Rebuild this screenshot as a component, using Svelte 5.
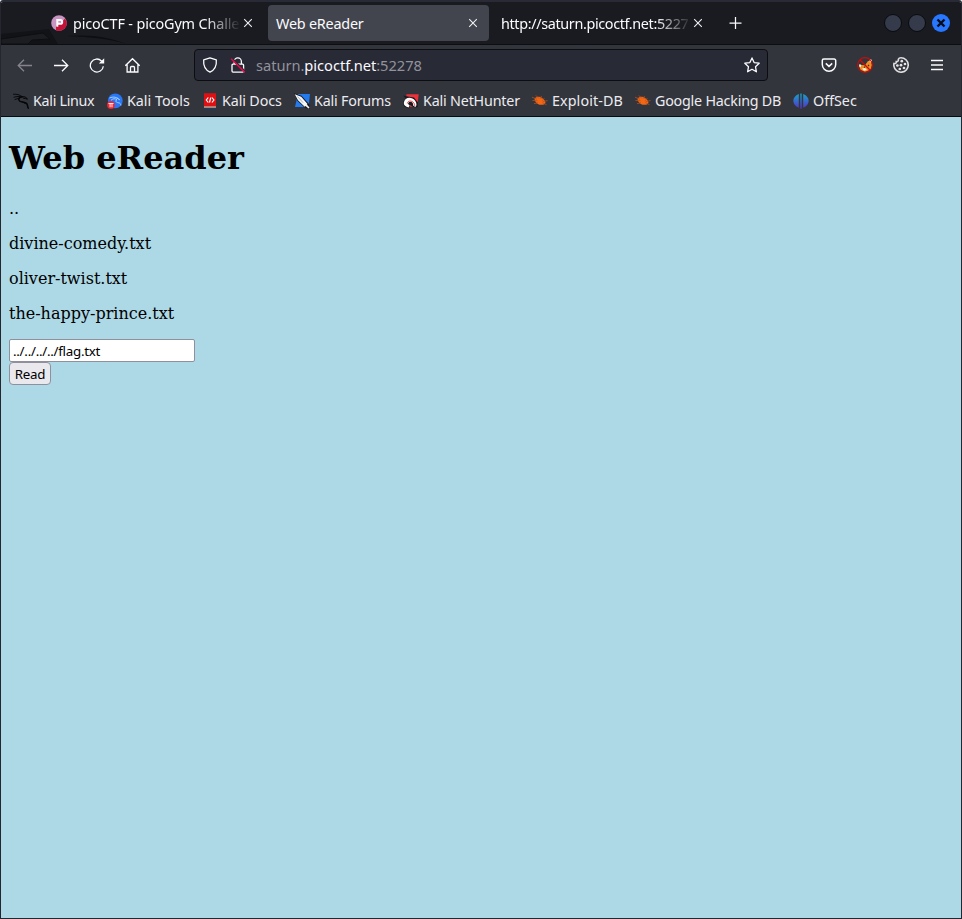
<script>
  const bookmarks = [
    { name: 'Kali Linux', icon: 'dragon', width: 94, track: -0.3 },
    { name: 'Kali Tools', icon: 'tools', width: 95, track: 0 },
    { name: 'Kali Docs', icon: 'docs', width: 92, track: -0.12 },
    { name: 'Kali Forums', icon: 'forums', width: 109, track: -0.2 },
    { name: 'Kali NetHunter', icon: 'hunter', width: 129, track: -0.18 },
    { name: 'Exploit-DB', icon: 'bug', width: 103, track: 0.1 },
    { name: 'Google Hacking DB', icon: 'bug', width: 158, track: -0.22 },
    { name: 'OffSec', icon: 'offsec', width: 80, track: 0 }
  ];
  const books = ['..', 'divine-comedy.txt', 'oliver-twist.txt', 'the-happy-prince.txt'];
  let file = $state('../../../../flag.txt');
</script>

{#snippet cross()}
  <svg class="cross" width="10" height="10" viewBox="0 0 10 10"><path d="M1.2 1.2l7.6 7.6M8.8 1.2L1.2 8.8" /></svg>
{/snippet}

{#snippet favicon(kind)}
  <svg class="fav" width="16" height="16" viewBox="0 0 16 16">
    {#if kind === 'dragon'}
      <g fill="none" stroke="#050607" stroke-linecap="round">
        <path stroke-width=".9" d="M.5 1.2C4 1 6.5 1.7 9 3.5M1 4.2c3-1 5-.8 8.2-.2M2 6.5l4.5-1.5" />
        <path stroke-width="1.5" d="M9 3.7C5.8 4 5 6.5 6.6 8c1.8 1.5 6.5.2 7.5 3.2.5 1.4.6 2.8 1.2 4" />
        <path stroke-width="1" d="M9 3.6l3.5.4 2 2.2-2-.6-2-.4M9.5 9l2.8 1.5" />
      </g>
    {:else if kind === 'tools'}
      <circle cx="8.3" cy="7.8" r="7.4" fill="#2777f6" />
      <path d="M2.5 5c4-1.7 7-.7 9 1M4 7.3c2-2 4-1.8 6-.8-2.2 1.5-.8 3 1.2 3.2 2 .2 2.500 1.3 2.700 2.8M10 5l3 2" fill="none" stroke="#b9d8ff" stroke-width=".9" />
      <circle cx="4" cy="12" r="3.9" fill="#ed2633" />
      <path d="M1.5 10.500h5M3.100 10.500v3.800M5 10.500v3.800" fill="none" stroke="#fff" stroke-width=".9" />
    {:else if kind === 'docs'}
      <path d="M2 .3h12v13.500H2z" fill="#df1014" />
      <path d="M2 13.500h12v1.300H2z" fill="#e9d4ad" />
      <path d="M2 14.700h12v1H2z" fill="#123f78" />
      <path d="M6.300 4.500L4.300 7l2 2.500M9.900 4.500l2 2.500-2 2.500M8.700 4.700L7.500 9.500" fill="none" stroke="#fff" stroke-width="1.200" />
    {:else if kind === 'forums'}
      <path d="M4 1h12l-1.500 13H1z" fill="#237bef" />
      <path d="M0 .2l7.5 2.600 7.5 8.200 1 4.500-4.500-.3L3.500 8z" fill="#171a1e" />
      <path d="M.7 1.300l6.500 2.400L13.500 11l-2.800 2.800L4 7.300zM12.800 11.500l2.700 3-1 1-3-2.500z" fill="#f4f6f7" />
      <path d="M3.500 3.600l5.500 6" stroke="#777e88" stroke-width=".6" />
    {:else if kind === 'hunter'}
      <path d="M3.500 1.200h12.200l-1.500 12.500H2z" fill="#ed3039" />
      <path d="M0 2.500l6 1.300 5 .8 4 5-.3 4.600h-4.200L7 12l-1 3.500-5-2L0 9l3-3.500z" fill="#171a1e" />
      <path d="M.8 9.800C1.500 4 8.500 3 12 7.500c1.700 2.500 2.200 5 .3 6.500l-2.200-1.500c.7-2.300-1.500-4.500-3.800-3.500-1.800.8-1.500 2.300.3 3.200l-1 2.200C2.700 13.800.6 12.200.8 9.800z" fill="#fff" />
      <path d="M4.300 10.500c.3-3 4.500-3.500 6.500-.5.8 1.200 1 2 .8 3" fill="none" stroke="#ed3039" stroke-width=".9" />
    {:else if kind === 'bug'}
      <path d="M2.500 5.500c2-2 3.500-2 5.500-1.500 3 1 5 3 5.500 5.800l-1.500 1.600c-2.300.7-4.200.6-6.200-.4C3.800 9.900 2.600 7.500 2.500 5.500z" fill="#f36614" />
      <path d="M0 4.200l5 2M.5 7.500l5 .2M2 10.700l4-1M3.800 2.400l3 3M9.300 3L9 6M12.300 5.200l-2 2.500M15.500 7.600l-4.700 1M14.500 11.700l-4-2" fill="none" stroke="#b5501d" stroke-width=".8" />
    {:else}
      <defs><linearGradient id="teal-violet" gradientUnits="userSpaceOnUse" x1="0" x2="0" y1="0" y2="16"><stop offset="0" stop-color="#15a8bd" /><stop offset=".55" stop-color="#3765cf" /><stop offset="1" stop-color="#5930be" /></linearGradient></defs>
      <path d="M5.800 1v13.800C-1.500 12-1.500 3.700 5.800 1zM10.200 1v13.800C17.500 12 17.500 3.700 10.200 1zM7.300.4h1.400v15.300H7.300z" fill="url(#teal-violet)" />
    {/if}
  </svg>
{/snippet}

<div class="window">
  <header class="tabs">
    <svg class="art" width="150" height="16" viewBox="0 0 150 16">
      <path d="M0 6L48 1l9 15H0z" fill="#121317" />
      <path d="M0 11l42-6 7 6-18 1-4 4H0z" fill="#1b1d21" stroke="#0e0f12" />
      <path d="M66 8c24-2 42 1 60 8-19-5-34-7-60-8z" fill="#0d0e11" />
    </svg>
    <div class="tab first">
      <svg class="pico" width="16" height="16" viewBox="0 0 16 16">
        <circle cx="8" cy="8" r="7.800" fill="#c894c1" />
        <path d="M15.800 7.200A7.800 7.800 0 0 1 5 15.200V11l6-4 3-3.500z" fill="#c41238" />
        <path d="M6.300 11.800V5h3a1.900 1.900 0 0 1 0 3.800h-3" fill="none" stroke="#fff" stroke-width="2" />
      </svg>
      <span class="label faded">picoCTF - picoGym Challe</span>
      {@render cross()}
    </div>
    <div class="tab active"><span class="label">Web eReader</span>{@render cross()}</div>
    <div class="tab third"><span class="label faded">http://saturn.picoctf.net:5227</span>{@render cross()}</div>
    <svg class="plus" width="14" height="14" viewBox="0 0 14 14"><path d="M7.5 1v12M1.5 7h12" /></svg>
    <div class="controls">
      <i></i><i></i>
      <svg width="18" height="18" viewBox="0 0 18 18"><circle cx="9" cy="9" r="9" fill="#2777ff" /><path d="M5.5 5.5l7 7M12.500 5.500l-7 7" fill="none" stroke="#080c18" stroke-width="2.4" /></svg>
    </div>
  </header>

  <nav class="toolbar">
    <div class="navrow">
      <div class="buttons">
        <svg class="dim" width="16" height="16" viewBox="0 0 16 16"><path d="M15 8.500H1.300M7 2.700L1.200 8.500 7 14.300" /></svg>
        <svg width="16" height="16" viewBox="0 0 16 16"><path d="M1 8.500h13.700M9 2.700l5.800 5.800L9 14.300" /></svg>
        <svg width="16" height="16" viewBox="0 0 16 16"><path d="M14.300 9.200A6.500 6.500 0 1 1 12.500 4L14 5.500" /><path d="M15.200 1.200v5.400H9.800z" fill="#fbfbfe" stroke="none" /></svg>
        <svg width="16" height="16" viewBox="0 0 16 16"><path d="M.3 8.700L7.500 1.700l7.200 7M2.100 7.300V15h10.800V7.300M5.500 14.900v-4.400a1 1 0 0 1 1-1h2a1 1 0 0 1 1 1v4.400" /></svg>
      </div>
      <div class="address">
        <svg width="16" height="16" viewBox="0 0 16 16"><path d="M8 .8l6.300 2.100c.5 5.400-1.500 10-6.300 12.300C3.200 12.900 1.200 8.300 1.700 2.900z" stroke-linejoin="round" /></svg>
        <svg class="lock" width="16" height="16" viewBox="0 0 16 16"><path d="M4.200 7V4.500a3.600 3.600 0 0 1 7.200 0V7M3 7.200h9.600a1 1 0 0 1 1 1v5.900a1 1 0 0 1-1 1H3a1 1 0 0 1-1-1V8.200a1 1 0 0 1 1-1z" /><path d="M1.800 1l13.500 13.500" class="under" /><path d="M1.100 1.700l13.700 13.700" class="slash" /></svg>
        <span class="url">saturn.<b>picoctf.net</b>:52278</span>
        <svg class="star" width="16" height="16" viewBox="0 0 16 16"><path d="M8 .9l2.100 4.700 5.100.6-3.700 3.500.9 5.100L8 12.300l-4.400 2.500.9-5.100L.8 6.200l5.100-.6z" stroke-linejoin="round" /></svg>
      </div>
      <div class="extensions">
        <svg width="16" height="16" viewBox="0 0 16 16"><path d="M2.800 2h10.400a1.500 1.500 0 0 1 1.500 1.500v4a6.700 6.700 0 0 1-13.400 0v-4A1.500 1.500 0 0 1 2.800 2zM4.800 6.400L8 9.400l3.200-3" stroke-width="1.500" /></svg>
        <svg width="16" height="16" viewBox="0 0 16 16">
          <path d="M2 9l3-1 3 .2 3-4.200L14 4l1 4-1.300 4.500L8 15l-4.500-2.200z" fill="#ee8f20" stroke="none" />
          <path d="M13 2l2 1-.5 3-2-2zM2.500 7l2 1-1 2.500L2 9zM5 11.500l3-.4 2 2-3 .7z" fill="#fff0dc" stroke="none" />
          <path d="M7 9.800l1 .7M11 9l1-1" stroke="#492812" />
          <circle cx="8" cy="8" r="7.400" fill="none" stroke="#c80c0c" stroke-width="1.100" /><path d="M2.800 2.800l10.400 10.400" stroke="#c80c0c" />
        </svg>
        <svg width="16" height="16" viewBox="0 0 16 16">
          <path d="M8 .8a7.200 7.200 0 1 1-7.100 8.300 7.300 7.300 0 0 1 .1-2.600c1.600.3 2.600-.6 2.300-1.900 1.600.1 2.400-.8 2-2.400C5.700 1.300 6.800.8 8 .8z" stroke="#dedee0" stroke-width="1.600" />
          <g fill="#e4e4e6" stroke="none"><circle cx="8.800" cy="4.200" r="1.350" /><circle cx="12" cy="7" r="1.350" /><circle cx="8" cy="8.200" r="1.350" /><circle cx="4.400" cy="8.500" r="1.350" /><circle cx="11" cy="11" r="1.350" /><circle cx="6.800" cy="12" r="1.350" /></g>
        </svg>
        <svg width="16" height="16" viewBox="0 0 16 16"><path d="M2 3.500h12M2 8h12M2 12.500h12" /></svg>
      </div>
    </div>
    <div class="bookmarks">
      {#each bookmarks as item}
        <div class="bookmark" style="width: {item.width}px; letter-spacing: {item.track}px">{@render favicon(item.icon)}<span>{item.name}</span></div>
      {/each}
    </div>
  </nav>

  <main>
    <h1>Web eReader</h1>
    {#each books as book}<p>{book}</p>{/each}
    <form onsubmit={(e) => e.preventDefault()}>
      <input type="text" bind:value={file} aria-label="File" spellcheck="false" />
      <button>Read</button>
    </form>
  </main>
</div>

<style>
  .window { box-sizing: border-box; width: 962px; height: 919px; display: flex; flex-direction: column; border: 1px solid #25262f; border-top: 2px solid #282a36; background: #add8e6; overflow: hidden; border-radius: 3px 3px 0 0; font-family: "Noto Sans", sans-serif; font-size: 14.67px; color: #fbfbfe; }
  svg { display: block; flex: none; }
  .tabs { position: relative; height: 42px; flex: none; display: flex; align-items: center; background: #1a1b20; border-bottom: 1px solid #0d0e11; }
  .art { position: absolute; left: 0; bottom: 0; }
  .tab { box-sizing: border-box; position: relative; height: 36px; display: flex; align-items: center; border-radius: 4px; }
  .first { margin-left: 50px; width: 204px; }
  .active { margin-left: 13px; width: 221px; padding: 0 11px 0 8px; background: #42454d; }
  .third { width: 215px; padding-left: 12px; }
  .pico { margin-right: 6px; }
  .label { padding-top: 2px; white-space: nowrap; line-height: 20px; font-size: 14.4px; letter-spacing: -0.22px; }
  .active .label { flex: 1; }
  .first .label { width: 168px; letter-spacing: -0.14px; }
  .third .label { width: 191px; letter-spacing: -0.36px; }
  .faded { mask-image: linear-gradient(to left, transparent, #000 36px); }
  .cross { stroke: #f0f0f3; stroke-width: 1.1; fill: none; }
  .first .cross { margin-left: 2px; }
  .third .cross { margin-left: 1px; }
  .plus { margin-left: 24px; fill: none; stroke: #fbfbfe; stroke-width: 1.25; }
  .controls { margin-left: auto; margin-right: 11px; display: flex; align-items: center; gap: 6px; }
  .controls i { box-sizing: border-box; width: 18px; height: 18px; border-radius: 50%; background: #353b4a; border: 1px solid #090b0f; }
  .toolbar { height: 71px; flex: none; background: #33353d; border-bottom: 1px solid #090a0d; }
  .navrow { display: flex; align-items: center; height: 40px; }
  .navrow svg { fill: none; stroke: #fbfbfe; stroke-width: 1.3; }
  .buttons { width: 193px; display: flex; gap: 20px; padding-left: 16px; box-sizing: border-box; }
  .buttons .dim { stroke: #84858b; }
  .address { box-sizing: border-box; width: 574px; height: 32px; display: flex; align-items: center; padding: 0 7px; background: #282a36; border: 1px solid #0c0d11; border-radius: 4px; }
  .lock { margin-left: 12px; }
  .address .under { stroke: #282a36; stroke-width: 1.6; }
  .address .slash { stroke: #e20b49; stroke-width: 1.5; }
  .url { flex: 1; margin-left: 10px; color: #92939a; letter-spacing: -0.04px; }
  .url b { color: #fbfbfe; font-weight: 400; }
  .extensions { margin-left: 53px; display: flex; gap: 20px; }
  .bookmarks { display: flex; height: 31px; align-items: center; padding-left: 12px; font-size: 14.3px; }
  .bookmark { display: flex; align-items: center; gap: 4px; flex: none; white-space: nowrap; line-height: 20px; color: #ececf0; }
  main { padding: 0 8px; color: #000; font-family: "DejaVu Serif", serif; font-size: 16px; }
  h1 { margin: 22px 0; font-size: 32px; line-height: 38px; font-weight: 700; }
  p { margin: 16px 0; line-height: 19px; }
  form { display: flex; flex-direction: column; align-items: flex-start; }
  input { box-sizing: border-box; width: 186px; height: 23px; padding: 1px 3px; border: 1px solid #8f8f9d; border-radius: 2px; background: #fff; color: #000; outline: none; font: 13.33px "Noto Sans", sans-serif; letter-spacing: -0.26px; }
  button { box-sizing: border-box; width: 42px; height: 23px; padding: 0; border: 1px solid #8f8f9d; border-radius: 4px; background: #e9e9ed; color: #000; font: 13.33px/20px "Noto Sans", sans-serif; letter-spacing: -0.25px; }
</style>
